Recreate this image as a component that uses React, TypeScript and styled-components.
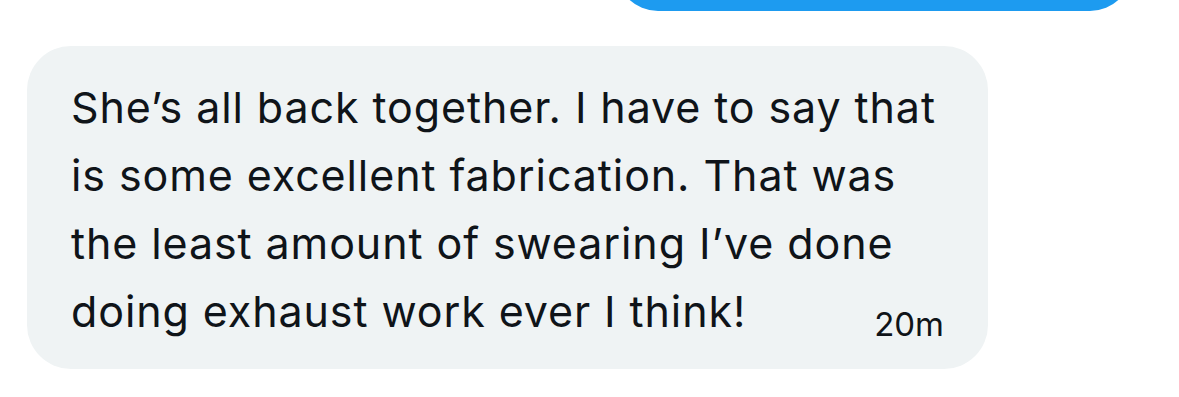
import { createGlobalStyle, styled } from "styled-components";

const GlobalStyle = createGlobalStyle`
    html, body {
        margin: 0;
        padding: 0;
        background: #ffffff;
    }
    body {
        font-family: Inter, "Liberation Sans", Arial, sans-serif;
        color: #0f1419;
    }
`

const Thread = styled.div`
    display: flex;
    flex-direction: column;
    width: 1179px;
    height: 397px;
    overflow: hidden;
`

// only the bottom of the sent message shows at the top edge
const SentRow = styled.div`
    display: flex;
    justify-content: flex-end;
    align-items: flex-end;
    height: 11px;
    overflow: hidden;
    padding-right: 47px;
`

const SentBubble = styled.div`
    width: 516px;
    height: 90px;
    flex-shrink: 0;
    background: #1d9bf0;
    border-radius: 42px;
`

const ReceivedRow = styled.div`
    display: flex;
    padding: 35px 0 0 27px;
`

const ReceivedBubble = styled.div`
    display: grid;
    width: 961px;
    box-sizing: border-box;
    padding: 27px 44px 24px 44px;
    background: #eff3f4;
    border-radius: 44px;
`

const MessageText = styled.p`
    grid-area: 1 / 1;
    margin: 0;
    font-size: 43px;
    line-height: 68px;
    letter-spacing: 0.9px;
    color: #0f1419;
    white-space: nowrap;
`

const Timestamp = styled.span`
    grid-area: 1 / 1;
    justify-self: end;
    align-self: end;
    margin-bottom: 4px;
    font-size: 33px;
    line-height: 33px;
    color: #0f1419;
`

const lines = [
    "She’s all back together. I have to say that",
    "is some excellent fabrication. That was",
    "the least amount of swearing I’ve done",
    "doing exhaust work ever I think!",
]

export default function App() {
    return (
        <>
            <GlobalStyle />
            <Thread>
                <SentRow>
                    <SentBubble />
                </SentRow>
                <ReceivedRow>
                    <ReceivedBubble>
                        <MessageText>
                            {lines.map((l, i) => (
                                <span key={i}>
                                    {l}
                                    {i < lines.length - 1 && <br />}
                                </span>
                            ))}
                        </MessageText>
                        <Timestamp>20m</Timestamp>
                    </ReceivedBubble>
                </ReceivedRow>
            </Thread>
        </>
    )
}
